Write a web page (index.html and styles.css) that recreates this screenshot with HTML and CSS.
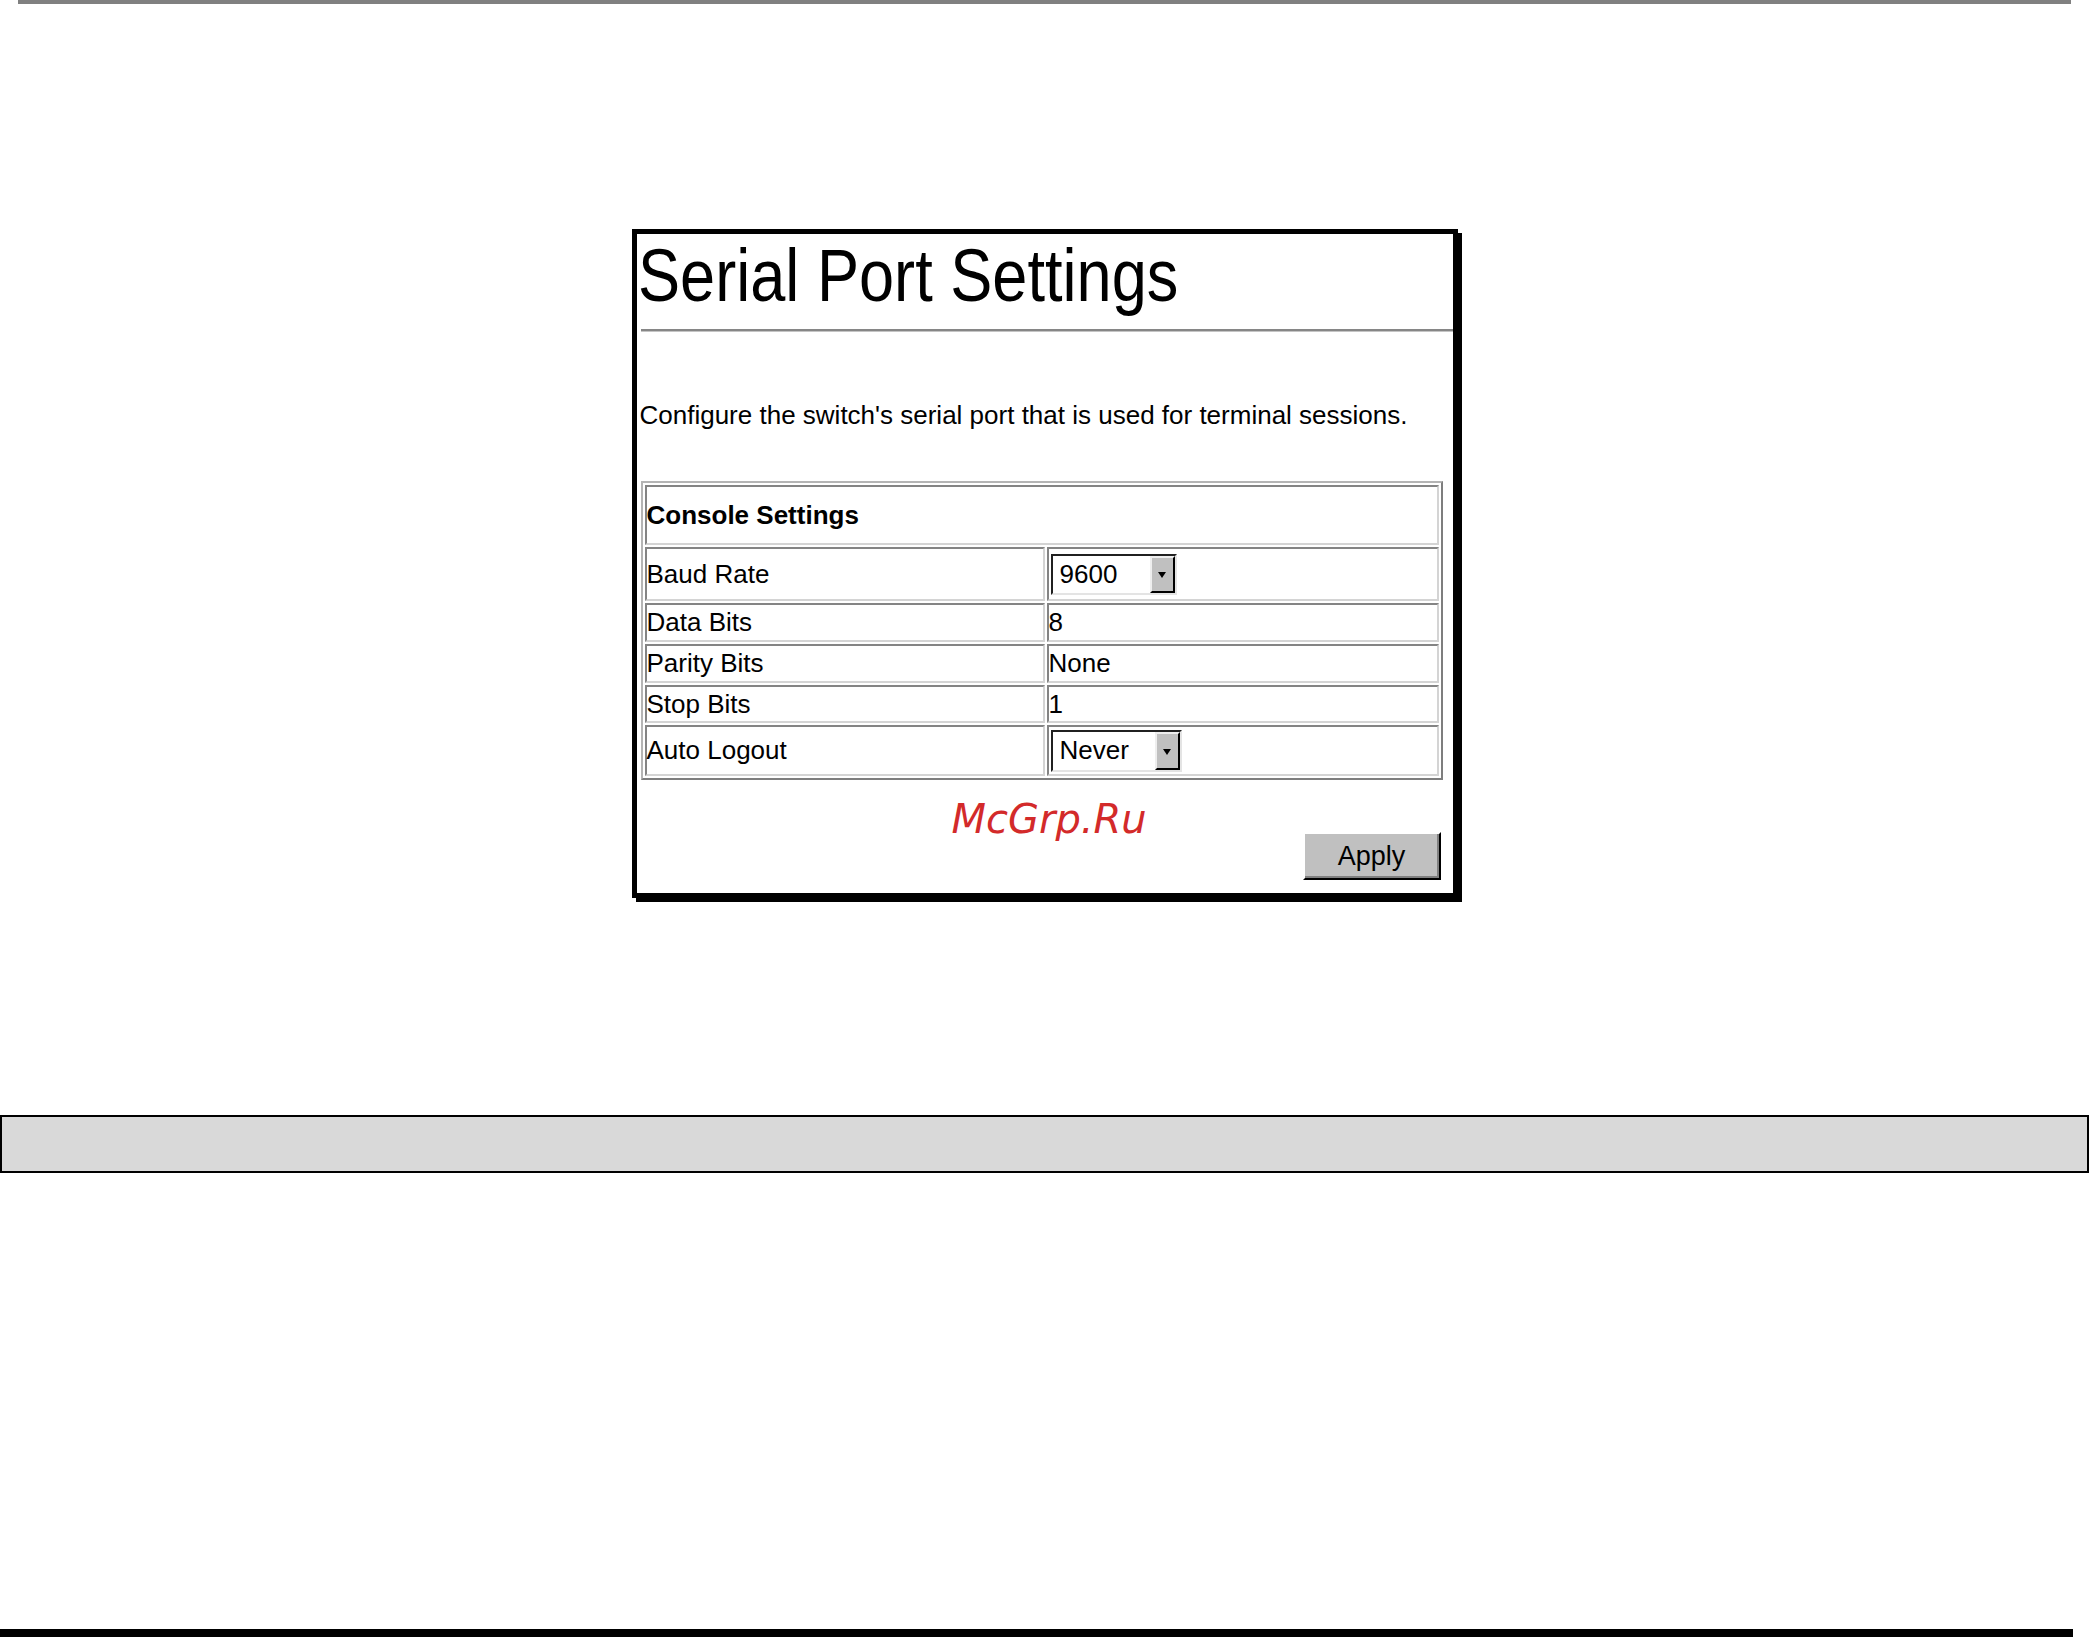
FILE: index.html
```html
<!DOCTYPE html>
<html lang="en">
<head>
  <meta charset="UTF-8">
  <meta name="viewport" content="width=device-width, initial-scale=1.0">
  <title>Serial Port Settings</title>
  <link rel="stylesheet" href="styles.css">
</head>
<body>

  <div class="top-rule"></div>

  <div class="panel">
    <h1 class="title"><span>Serial Port Settings</span></h1>
    <div class="title-rule"></div>

    <p class="intro">Configure the switch's serial port that is used for terminal sessions.</p>

    <!-- Console settings table -->
    <table class="settings">
      <tr class="row-head">
        <th colspan="2">Console Settings</th>
      </tr>
      <tr class="row-baud">
        <td class="label">Baud Rate</td>
        <td>
          <span class="dropdown dropdown-baud">
            <span class="dropdown-value">9600</span>
            <span class="dropdown-arrow"></span>
          </span>
        </td>
      </tr>
      <tr class="row-plain">
        <td class="label">Data Bits</td>
        <td>8</td>
      </tr>
      <tr class="row-plain">
        <td class="label">Parity Bits</td>
        <td>None</td>
      </tr>
      <tr class="row-stop">
        <td class="label">Stop Bits</td>
        <td>1</td>
      </tr>
      <tr class="row-logout">
        <td class="label">Auto Logout</td>
        <td>
          <span class="dropdown dropdown-logout">
            <span class="dropdown-value">Never</span>
            <span class="dropdown-arrow"></span>
          </span>
        </td>
      </tr>
    </table>

    <div class="actions">
      <button class="btn-apply">Apply</button>
    </div>

    <div class="watermark">McGrp.Ru</div>
  </div>

  <div class="status-bar"></div>

  <div class="bottom-rule"></div>

</body>
</html>
```

FILE: styles.css
```css
body {
  margin: 0;
  font-family: "Liberation Sans", Arial, sans-serif;
  background-color: #fff;
  color: #000;
}

.top-rule {
  height: 4px;
  margin: 0 18px;
  background-color: #808080;
}

/* framed settings window */
.panel {
  position: relative;
  box-sizing: border-box;
  width: 826px;
  margin: 225px auto 0;
  padding: 0 0 13px 4px;
  border: 5px solid #000;
  box-shadow: 4px 4px 0 #000;
}

.title {
  margin: 5px 0 0 -3px;
  font-size: 74px;
  font-weight: normal;
  line-height: 74px;
  white-space: nowrap;
}

.title span {
  display: inline-block;
  transform: scaleX(0.853);
  transform-origin: 0 50%;
}

.title-rule {
  margin-top: 16px;
  border-top: 2px solid #868686;
  border-bottom: 1px solid #c4c4c4;
}

.intro {
  margin: 68px 0 0 -1px;
  font-size: 26px;
  line-height: 30px;
}

.settings {
  margin-top: 51px;
  width: 802px;
  border-collapse: separate;
  border-spacing: 2px;
  border: 2px solid;
  border-color: #b4b4b4 #7e7e7e #7e7e7e #b4b4b4;
  font-size: 26px;
}

.settings th,
.settings td {
  padding: 0;
  text-align: left;
  vertical-align: middle;
  border: 2px solid;
  border-color: #848484 #d4d4d4 #d4d4d4 #848484;
}

.settings th {
  font-weight: bold;
}

.settings .label {
  width: 396px;
}

.row-head { height: 60px; }
.row-baud { height: 54px; }
.row-plain { height: 39px; }
.row-stop { height: 38px; }
.row-logout { height: 51px; }

/* fake select box */
.dropdown {
  display: inline-flex;
  box-sizing: border-box;
  margin-left: 2px;
  vertical-align: middle;
  background-color: #fff;
  border: 2px solid;
  border-color: #202020 #e4e4e4 #e4e4e4 #202020;
}

.dropdown-baud {
  width: 126px;
  height: 41px;
}

.dropdown-logout {
  width: 131px;
  height: 42px;
}

.dropdown-value {
  flex: 1;
  padding-left: 7px;
  display: flex;
  align-items: center;
}

.dropdown-arrow {
  width: 21px;
  display: flex;
  align-items: center;
  justify-content: center;
  background-color: #c0c0c0;
  border: 2px solid;
  border-color: #eeeeee #000 #000 #eeeeee;
}

.dropdown-arrow::after {
  content: "";
  margin-top: 2px;
  border-left: 4px solid transparent;
  border-right: 4px solid transparent;
  border-top: 6px solid #000;
}

.actions {
  margin-top: 52px;
  width: 802px;
  display: flex;
  justify-content: flex-end;
}

.btn-apply {
  box-sizing: border-box;
  width: 138px;
  height: 48px;
  margin-right: 2px;
  padding: 0;
  font-family: "Liberation Sans", Arial, sans-serif;
  font-size: 27px;
  color: #000;
  background-color: #c0c0c0;
  border: 2px solid;
  border-color: #fff #000 #000 #fff;
  box-shadow: inset -2px -2px 0 #808080;
}

.watermark {
  position: absolute;
  left: 315px;
  top: 565px;
  font-family: "DejaVu Sans", sans-serif;
  font-style: italic;
  font-size: 40px;
  line-height: 40px;
  color: #d32a2a;
}

.status-bar {
  margin-top: 217px;
  height: 54px;
  border: 2px solid #000;
  background-color: #d9d9d9;
}

.bottom-rule {
  height: 9px;
  margin: 456px 16px 0 0;
  background-color: #000;
}
```
